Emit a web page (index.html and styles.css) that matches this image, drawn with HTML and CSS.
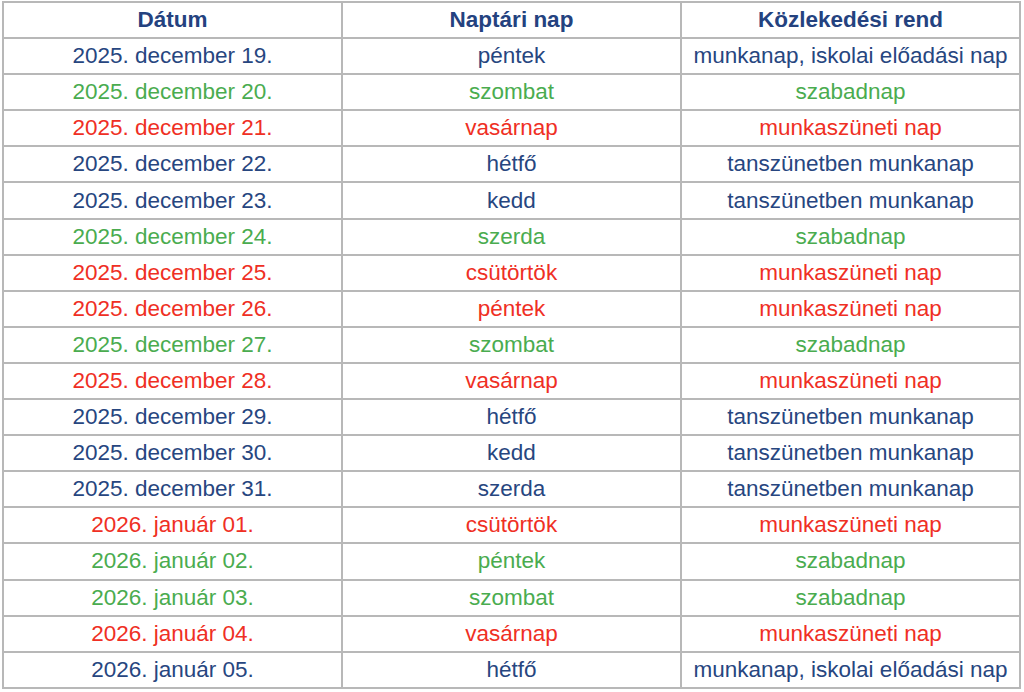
FILE: index.html
```html
<!DOCTYPE html>
<html lang="hu">
<head>
<meta charset="utf-8">
<link rel="stylesheet" href="styles.css">
</head>
<body>
<table class="cal">
  <thead>
    <tr><th>Dátum</th><th>Naptári nap</th><th>Közlekedési rend</th></tr>
  </thead>
  <tbody>
    <tr class="work"><td>2025. december 19.</td><td>péntek</td><td>munkanap, iskolai előadási nap</td></tr>
    <tr class="free"><td>2025. december 20.</td><td>szombat</td><td>szabadnap</td></tr>
    <tr class="holi"><td>2025. december 21.</td><td>vasárnap</td><td>munkaszüneti nap</td></tr>
    <tr class="work"><td>2025. december 22.</td><td>hétfő</td><td>tanszünetben munkanap</td></tr>
    <tr class="work"><td>2025. december 23.</td><td>kedd</td><td>tanszünetben munkanap</td></tr>
    <tr class="free"><td>2025. december 24.</td><td>szerda</td><td>szabadnap</td></tr>
    <tr class="holi"><td>2025. december 25.</td><td>csütörtök</td><td>munkaszüneti nap</td></tr>
    <tr class="holi"><td>2025. december 26.</td><td>péntek</td><td>munkaszüneti nap</td></tr>
    <tr class="free"><td>2025. december 27.</td><td>szombat</td><td>szabadnap</td></tr>
    <tr class="holi"><td>2025. december 28.</td><td>vasárnap</td><td>munkaszüneti nap</td></tr>
    <tr class="work"><td>2025. december 29.</td><td>hétfő</td><td>tanszünetben munkanap</td></tr>
    <tr class="work"><td>2025. december 30.</td><td>kedd</td><td>tanszünetben munkanap</td></tr>
    <tr class="work"><td>2025. december 31.</td><td>szerda</td><td>tanszünetben munkanap</td></tr>
    <tr class="holi"><td>2026. január 01.</td><td>csütörtök</td><td>munkaszüneti nap</td></tr>
    <tr class="free"><td>2026. január 02.</td><td>péntek</td><td>szabadnap</td></tr>
    <tr class="free"><td>2026. január 03.</td><td>szombat</td><td>szabadnap</td></tr>
    <tr class="holi"><td>2026. január 04.</td><td>vasárnap</td><td>munkaszüneti nap</td></tr>
    <tr class="work"><td>2026. január 05.</td><td>hétfő</td><td>munkanap, iskolai előadási nap</td></tr>
  </tbody>
</table>
</body>
</html>
```
FILE: styles.css
```css
html, body {
  margin: 0;
  padding: 0;
  background: #ffffff;
}
body {
  padding: 1px 0 0 2px;
  font-family: "Liberation Sans", Arial, sans-serif;
}
.cal {
  border-collapse: collapse;
  width: 1019px;
  table-layout: fixed;
  font-size: 22.5px;
}
.cal th, .cal td {
  border: 2px solid #b8b8b8;
  text-align: center;
  vertical-align: middle;
  padding: 0;
  height: 34.1px;
  line-height: 24px;
}
.cal th {
  color: #24427f;
  font-weight: bold;
}
.work td { color: #27467f; }
.free td { color: #4aac4f; }
.holi td { color: #ef2f24; }
```
